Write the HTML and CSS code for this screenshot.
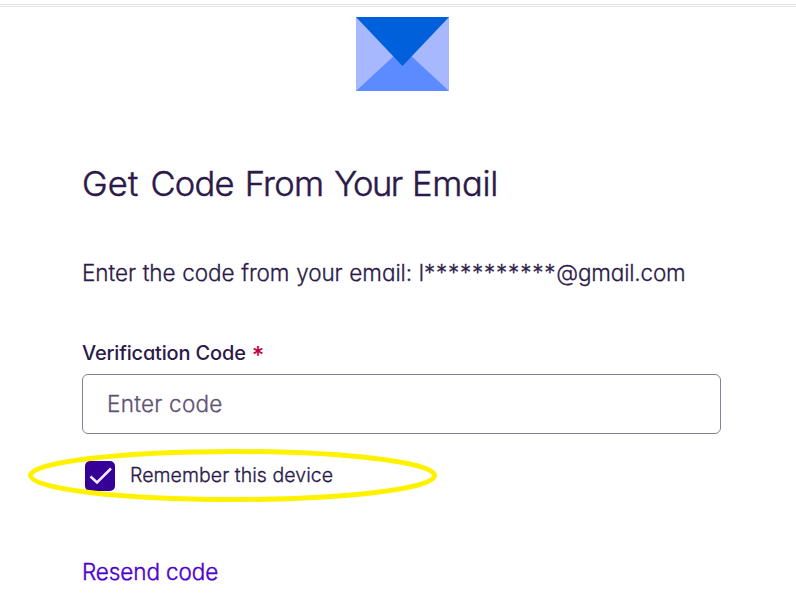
FILE: index.html
```html
<!DOCTYPE html>
<html lang="en">
<head>
<meta charset="utf-8">
<title>Get Code From Your Email</title>
<link rel="stylesheet" href="styles.css">
</head>
<body>
<div class="topbar"></div>
<main class="card">
  <svg class="envelope" viewBox="0 0 92 74" preserveAspectRatio="none" aria-hidden="true">
    <path fill="#a7b8ff" d="M0 0h92v74H0z"/>
    <path fill="#5c8aff" d="M0 74 46 31 92 74z"/>
    <path fill="#005fdb" d="M0 0h92L46 49z"/>
  </svg>
  <h1 class="title"><span class="loose">Get </span>Code From <span class="tight">Your </span><span class="last">Email</span></h1>
  <p class="intro"><span>Enter the code from your email: </span><span>l</span><span class="mask">***********</span><span class="domain">@gmail.com</span></p>
  <label class="label" for="code"><span>Verification Code</span><span class="required">*</span></label>
  <input class="field" id="code" type="text" placeholder="Enter code">
  <label class="remember">
    <svg class="check" viewBox="0 0 30 30" aria-hidden="true">
      <rect width="30" height="30" rx="5" fill="#360098"/>
      <path d="M5.5 15.5 12 21.5 26 7.5" fill="none" stroke="#f5eaff" stroke-width="2.5"/>
    </svg>
    <span class="remember-text">Remember this device</span>
    <svg class="highlight" viewBox="0 0 410 54" aria-hidden="true">
      <ellipse cx="204.5" cy="26.5" rx="202" ry="24" fill="none" stroke="#fff200" stroke-width="5"/>
    </svg>
  </label>
  <a class="resend"><span>Resend code</span></a>
</main>
</body>
</html>
```
FILE: styles.css
```css
* { box-sizing: border-box; }
body {
  margin: 0;
  height: 593px;
  overflow: hidden;
  background: #fff;
  color: #2b1a49;
  font-family: Inter, "Liberation Sans", sans-serif;
  font-feature-settings: "cv11", "calt" 0;
}
.topbar {
  height: 7px;
  border-bottom: 1px solid #e5e5e5;
  background: linear-gradient(#fff 4px, #e5e5e5 4px, #e5e5e5 5px, #fff 5px);
}
.card {
  display: flex;
  flex-direction: column;
  width: 639px;
  margin-left: 82px;
}
.envelope {
  width: 93px;
  height: 74px;
  margin: 10px 0 0 274px;
}
.title {
  margin: 71px 0 0;
  font-size: 34.5px;
  line-height: 44px;
  font-weight: 300;
  letter-spacing: -0.75px;
  word-spacing: 2px;
  white-space: nowrap;
  -webkit-text-stroke: 0.5px currentColor;
}
.loose { letter-spacing: 0.2px; }
.tight { letter-spacing: -1.5px; }
.last { letter-spacing: -0.25px; }
.intro {
  margin: 51px 0 0;
  font-size: 22.5px;
  line-height: 32px;
  font-weight: 300;
  letter-spacing: -0.07px;
  word-spacing: 0.5px;
  white-space: nowrap;
  -webkit-text-stroke: 0.3px currentColor;
}
.mask { letter-spacing: 0.76px; }
.domain { letter-spacing: -0.16px; }
.label {
  height: 24px;
  margin-top: 52px;
  font-size: 20px;
  line-height: 24px;
  font-weight: 500;
  letter-spacing: -0.17px;
}
.required {
  display: inline-block;
  margin-left: 6px;
  color: #c40043;
  font-size: 24px;
  line-height: 20px;
  vertical-align: -4px;
  height: 20px;
}
.field {
  height: 60px;
  margin-top: 9px;
  padding: 0 24px 2px;
  border: 1px solid #85809a;
  border-radius: 6px;
  background: #fff;
  font: inherit;
  font-feature-settings: inherit;
  font-size: 22.5px;
  font-weight: 300;
  letter-spacing: 0.25px;
  -webkit-text-stroke: 0.3px currentColor;
}
.field::placeholder { color: #5f5272; opacity: 1; }
.remember {
  position: relative;
  display: flex;
  align-items: center;
  gap: 15px;
  height: 30px;
  margin: 27px 0 0 3px;
  font-size: 19.5px;
  line-height: 28px;
  font-weight: 300;
  letter-spacing: 0.06px;
  -webkit-text-stroke: 0.3px currentColor;
}
.remember-text { margin-bottom: 2px; }
.check { width: 30px; height: 30px; }
.highlight {
  position: absolute;
  left: -57px;
  top: -12px;
  width: 410px;
  height: 54px;
}
.resend {
  margin-top: 65px;
  color: #4d00cc;
  font-size: 22.5px;
  line-height: 32px;
  font-weight: 300;
  letter-spacing: -0.1px;
  -webkit-text-stroke: 0.4px currentColor;
}
```
